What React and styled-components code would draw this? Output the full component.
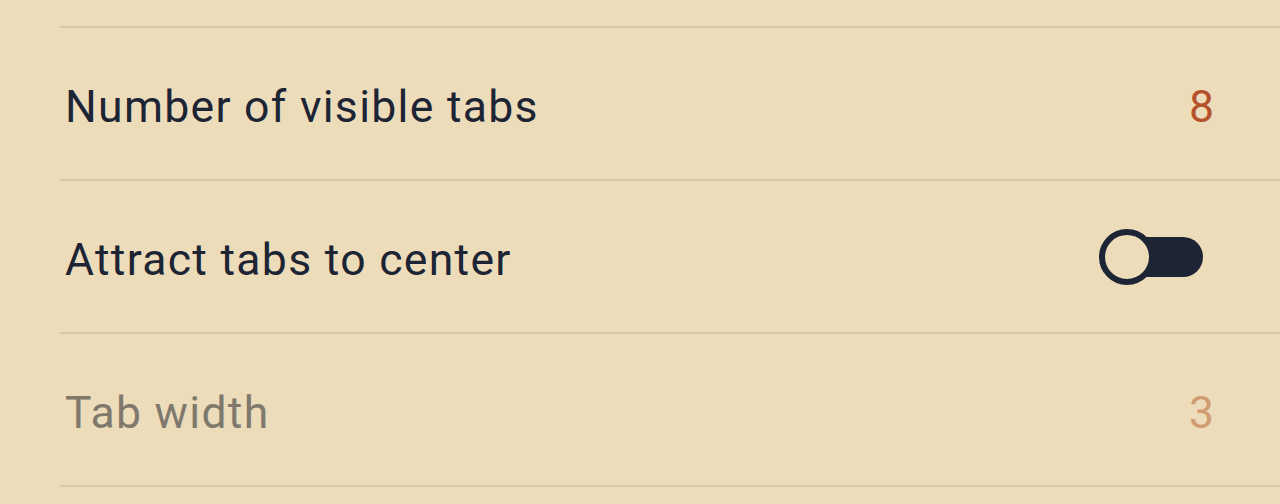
import React from "react";
import styled, { createGlobalStyle } from "styled-components";

const Global = createGlobalStyle`
  html, body { margin: 0; padding: 0; background: #ecdcba; }
  body { font-family: Roboto, "Noto Sans", sans-serif; overflow: hidden; }
`;

const Page = styled.div`
  width: 1280px;
  height: 504px;
  background: #ecdcba;
  padding-left: 60px;
  box-sizing: border-box;
  display: flex;
  flex-direction: column;
`;

const Row = styled.div`
  height: ${(p) => p.$h || 151}px;
  flex: none;
  border-bottom: 2px solid #d8c8a5;
  display: flex;
  align-items: center;
  justify-content: space-between;
  padding: 0 66px 0 5px;
`;

const Label = styled.span`
  font-size: 44.5px;
  line-height: 52px;
  padding-top: 6px;
  color: ${(p) => (p.$disabled ? "#7f796d" : "#1d2433")};
  letter-spacing: 1.3px;
`;

const Value = styled.span`
  font-size: 44.5px;
  line-height: 52px;
  padding-top: 6px;
  color: ${(p) => (p.$disabled ? "#d19c72" : "#b4532b")};
`;

const Switch = styled.div`
  position: relative;
  width: 104px;
  height: 56px;
  margin-right: 11px;
  flex: none;
`;

const Track = styled.div`
  position: absolute;
  left: 26px;
  right: 0;
  top: 8px;
  height: 40px;
  background: #1d2433;
  border-radius: 0 20px 20px 0;
`;

const Thumb = styled.div`
  position: absolute;
  left: 0;
  top: 0;
  width: 56px;
  height: 56px;
  box-sizing: border-box;
  border: 6px solid #1d2433;
  border-radius: 50%;
  background: #ecdcba;
`;

export default function App() {
  return (
    <>
      <Global />
      <Page>
        <Row $h={26} />
        <Row>
          <Label>Number of visible tabs</Label>
          <Value>8</Value>
        </Row>
        <Row>
          <Label>Attract tabs to center</Label>
          <Switch>
            <Track />
            <Thumb />
          </Switch>
        </Row>
        <Row>
          <Label $disabled>Tab width</Label>
          <Value $disabled>3</Value>
        </Row>
      </Page>
    </>
  );
}
